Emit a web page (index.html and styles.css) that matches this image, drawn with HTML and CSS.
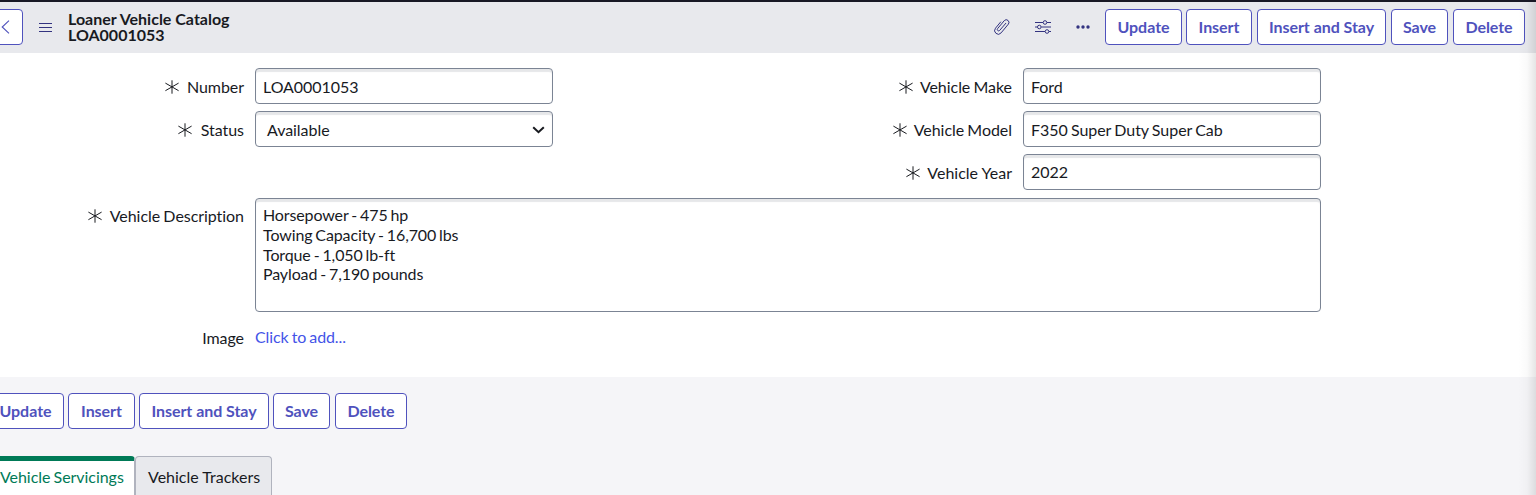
FILE: index.html
```
<!DOCTYPE html>
<html lang="en">
<head>
<meta charset="utf-8">
<title>Loaner Vehicle Catalog</title>
<link rel="stylesheet" href="styles.css">
</head>
<body>
<svg class="defs" width="0" height="0">
  <symbol id="required" viewBox="0 0 14 14"><path d="M7 .3v13.4M.4 3.1l13.2 7.6M.4 10.7l13.2-7.6" fill="none" stroke="currentColor" stroke-width="1"/></symbol>
</svg>
<header class="header">
  <button class="btn back" aria-label="Back"><svg width="9" height="14" viewBox="0 0 9 14"><path d="M8 .7L1.2 7 8 13.3" fill="none" stroke="currentColor" stroke-width="1.1"/></svg></button>
  <svg class="menu" width="13" height="10" viewBox="0 0 13 10"><path d="M0 1.5h13M0 5.5h13M0 9.5h13" stroke="currentColor"/></svg>
  <h1 class="title">Loaner Vehicle Catalog<br>LOA0001053</h1>
  <div class="tools">
    <svg width="16" height="18" viewBox="0 0 16 18"><path d="M11.8 5.3L5.7 12.4a1.35 1.35 0 0 1-2.1-1.8l6.7-8a2.7 2.7 0 0 1 4.1 3.5l-7.3 8.8a3.65 3.65 0 0 1-5.6-4.7L6.6 4" fill="none" stroke="currentColor" stroke-width="1" stroke-linecap="round"/></svg>
    <svg width="16" height="14" viewBox="0 0 16 14"><g fill="none" stroke="currentColor"><path d="M0 2.5h8M12 2.5h4M0 7h2.3M6.3 7H16M0 11.5h10M14 11.5h2"/><circle cx="10" cy="2.5" r="1.8"/><circle cx="4.3" cy="7" r="1.8"/><circle cx="12" cy="11.5" r="1.8"/></g></svg>
    <svg width="14" height="4" viewBox="0 0 14 4"><g fill="currentColor"><circle cx="2" cy="2" r="1.7"/><circle cx="7" cy="2" r="1.7"/><circle cx="12" cy="2" r="1.7"/></g></svg>
  </div>
  <div class="actions">
    <button class="btn update">Update</button>
    <button class="btn insert">Insert</button>
    <button class="btn stay">Insert and Stay</button>
    <button class="btn save">Save</button>
    <button class="btn delete">Delete</button>
  </div>
</header>
<main class="form">
  <div class="columns">
    <div class="column">
      <div class="row"><span class="label"><svg class="star"><use href="#required"/></svg>Number</span><div class="field">LOA0001053</div></div>
      <div class="row"><span class="label"><svg class="star wider"><use href="#required"/></svg>Status</span><div class="field select">Available<svg width="13" height="8" viewBox="0 0 13 8"><path d="M1.2 1.2l5.3 5 5.3-5" fill="none" stroke="currentColor" stroke-width="2"/></svg></div></div>
    </div>
    <div class="column right">
      <div class="row"><span class="label"><svg class="star"><use href="#required"/></svg>Vehicle Make</span><div class="field">Ford</div></div>
      <div class="row"><span class="label"><svg class="star"><use href="#required"/></svg>Vehicle Model</span><div class="field">F350 Super Duty Super Cab</div></div>
      <div class="row"><span class="label loose"><svg class="star"><use href="#required"/></svg>Vehicle Year</span><div class="field year">2022</div></div>
    </div>
  </div>
  <div class="row wide"><span class="label"><svg class="star"><use href="#required"/></svg>Vehicle Description</span><div class="field area">Horsepower - 475 hp<br>Towing Capacity - 16,700 lbs<br>Torque - 1,050 lb-ft<br>Payload - 7,190 pounds</div></div>
  <div class="row image"><span class="label">Image</span><a class="link">Click to add...</a></div>
</main>
<footer class="footer">
  <div class="actions">
    <button class="btn update">Update</button>
    <button class="btn insert">Insert</button>
    <button class="btn stay">Insert and Stay</button>
    <button class="btn save">Save</button>
    <button class="btn delete">Delete</button>
  </div>
  <nav class="tabs">
    <a class="tab active">Vehicle Servicings</a>
    <a class="tab loose">Vehicle Trackers</a>
  </nav>
</footer>
<div class="edge"></div>
</body>
</html>
```
FILE: styles.css
```
* { box-sizing: border-box; }
body {
  margin: 0;
  height: 495px;
  overflow: hidden;
  position: relative;
  display: flex;
  flex-direction: column;
  font: 16px/20px Lato, sans-serif;
  font-variant-ligatures: none;
  letter-spacing: -.05px;
  word-spacing: -.8px;
  color: #181a1f;
  background: #f5f5f8;
}
svg { flex: none; display: block; }
.defs { display: none; }

.header {
  height: 53px;
  flex: none;
  display: flex;
  align-items: center;
  border-top: 2px solid #181825;
  padding: 0 11px 1px 0;
  background: #e8e9ed;
}
.btn {
  height: 36px;
  padding: 0;
  border: 1px solid #4f52bd;
  border-radius: 4px;
  background: #fff;
  color: #4f52bd;
  font: bold 16px/20px Lato, sans-serif;
  letter-spacing: -.04px;
  white-space: nowrap;
}
.back { width: 33px; margin-left: -10px; padding-left: 10px; }
.menu { margin-left: 16px; color: #333380; }
.title {
  margin: 0 0 0 16px;
  font-size: 16px;
  line-height: 16px;
  padding-bottom: 1px;
  letter-spacing: 0;
  word-spacing: 0;
}
.tools { display: flex; align-items: center; gap: 25px; margin-left: auto; margin-right: 15.5px; color: #333380; }
.actions { display: flex; gap: 4px; }
.update { width: 77px; }
.insert { width: 66px; }
.stay { width: 129px; margin-left: 1px; }
.save { width: 57px; margin-left: 1px; }
.delete { width: 72px; margin-left: 1px; }
.footer .insert { width: 67px; }
.footer .stay { width: 130px; margin-left: 0; }
.footer .save { margin-left: 0; }

.form { height: 324px; flex: none; padding-top: 15px; background: #fff; }
.columns { display: grid; grid-template-columns: 768px 768px; }
.column { display: flex; flex-direction: column; gap: 7px; }
.row { display: grid; grid-template-columns: 244px 298px; column-gap: 11px; }
.wide { grid-template-columns: 244px 1066px; margin-top: 8px; }
.label { display: flex; justify-content: flex-end; align-items: center; height: 36px; padding-top: 2px; white-space: nowrap; }
.star { width: 14px; height: 14px; margin: 0 8px 1px 0; }
.star.wider { margin-right: 9px; }
.right .star { margin-right: 7px; }
.field {
  height: 36px;
  padding: 8px 7px 0;
  border: 1px solid #7b8494;
  border-radius: 4px;
  background: #fff;
  box-shadow: inset 0 3px 1px #e6e7e9;
  white-space: nowrap;
}
.year { padding-top: 7px; }
.select { display: flex; justify-content: space-between; padding-left: 11px; }
.select svg { margin-top: 6px; }
.area {
  height: 114px;
  padding-top: 6px;
  line-height: 19.8px;
  letter-spacing: -.12px;
  word-spacing: -1px;
}
.wide .label { padding-top: 0; }
.image { margin-top: 8px; }
.image .label { padding-top: 0; }
.link { color: #4353e8; padding-top: 7px; letter-spacing: -.12px; }

.footer { flex: 1; display: flex; flex-direction: column; justify-content: space-between; padding-top: 16px; }
.footer .actions { margin-left: -13px; }
.tabs { display: flex; height: 39px; }
.tab {
  width: 137px;
  height: 39px;
  padding: 10px 0 0 12px;
  border: 1px solid #b0b3be;
  border-bottom: 0;
  border-radius: 4px 4px 0 0;
  background: #e8e9ed;
  white-space: nowrap;
}
.active {
  width: 135px;
  padding: 6px 0 0;
  border-width: 5px 1px 0 0;
  border-top-color: #007a57;
  border-radius: 0 4px 0 0;
  background: #fff;
  color: #007a57;
}
.loose { letter-spacing: 0; word-spacing: 0; }
.edge {
  position: absolute;
  inset: 2px 0 0 auto;
  width: 18px;
  background: linear-gradient(to right, transparent, rgba(0, 0, 0, .02) 50%, rgba(0, 0, 0, .1));
}
```
